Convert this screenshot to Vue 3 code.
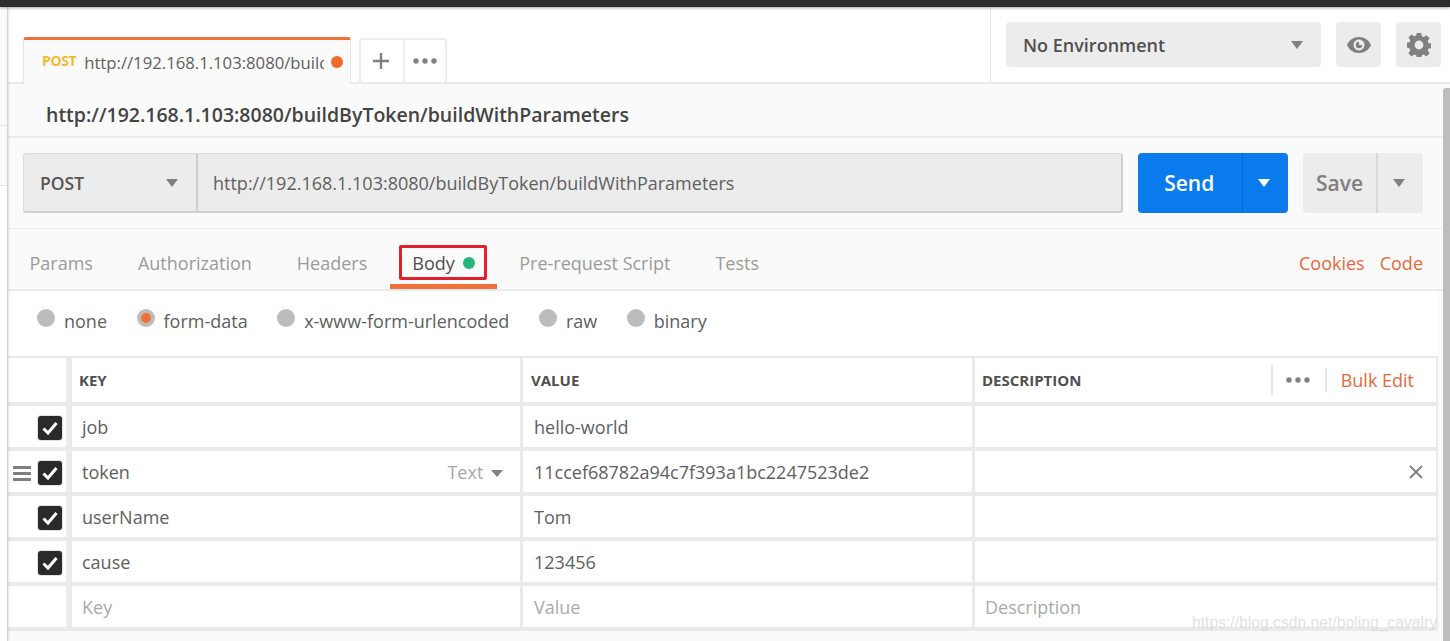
<script setup>
const tabs = [
  { label: 'Params' },
  { label: 'Authorization' },
  { label: 'Headers' },
  { label: 'Body', active: true },
  { label: 'Pre-request Script' },
  { label: 'Tests' },
]
const radios = [
  { label: 'none' },
  { label: 'form-data', on: true },
  { label: 'x-www-form-urlencoded' },
  { label: 'raw' },
  { label: 'binary' },
]
const rows = [
  { key: 'job', value: 'hello-world' },
  { key: 'token', value: '11ccef68782a94c7f393a1bc2247523de2', hover: true },
  { key: 'userName', value: 'Tom' },
  { key: 'cause', value: '123456' },
]
</script>

<template>
  <div class="app">
    <div class="topbar"></div>
    <div class="frame">
      <aside class="rail"></aside>
      <main class="main">
        <header class="head">
          <div class="tabs">
            <div class="tab">
              <span class="verb">POST</span>
              <span class="tab-url">http://192.168.1.103:8080/buildByToken/buildWithParameters</span>
              <span class="tab-dot"></span>
            </div>
            <div class="tab-tools">
              <div class="tool tool-plus">
                <svg width="18" height="18" viewBox="0 0 18 18"><path d="M9 1v16M1 9h16" stroke="#808080" stroke-width="2.4" fill="none" /></svg>
              </div>
              <div class="tool tool-more">
                <svg width="24" height="6" viewBox="0 0 24 6"><circle cx="3" cy="3" r="2.7" fill="#808080" /><circle cx="12" cy="3" r="2.7" fill="#808080" /><circle cx="21" cy="3" r="2.7" fill="#808080" /></svg>
              </div>
            </div>
          </div>
          <div class="env">
            <div class="env-select">
              <span>No Environment</span>
              <i class="caret"></i>
            </div>
            <div class="env-btn">
              <svg width="26" height="16" viewBox="0 0 26 16">
                <path fill-rule="evenodd" fill="#808080" d="M13 0C7.500 0 3 3.200 1 8c2 4.800 6.500 8 12 8s10-3.200 12-8c-2-4.800-6.500-8-12-8zm0 2.600c-3 0-5.400 2.400-5.400 5.400s2.400 5.400 5.400 5.400 5.400-2.400 5.400-5.400-2.400-5.400-5.400-5.400z" />
                <path fill="#808080" d="M13 4.800a3.200 3.200 0 1 0 3.200 3.200H13z" />
              </svg>
            </div>
            <div class="env-btn">
              <svg width="24" height="24" viewBox="0 0 24 24">
                <path fill-rule="evenodd" fill="#808080" d="M9.800 0h4.400l.6 3.300 1.900.8 2.800-1.900 3.100 3.100-1.900 2.800.8 1.900 3.300.6v4.400l-3.300.6-.8 1.900 1.900 2.800-3.100 3.100-2.800-1.900-1.900.8-.6 3.300H9.800l-.6-3.300-1.900-.8-2.800 1.900-3.100-3.100 1.900-2.800-.8-1.900L-.8 14.200V9.800l3.300-.6.8-1.900-1.900-2.800 3.100-3.100 2.800 1.900 1.900-.8zM12 7.600a4.400 4.400 0 1 0 0 8.800 4.400 4.400 0 0 0 0-8.800z" />
              </svg>
            </div>
          </div>
        </header>

        <div class="content">
          <h1 class="title">http://192.168.1.103:8080/buildByToken/buildWithParameters</h1>

          <section class="url-row">
            <div class="url-box">
              <div class="method"><span>POST</span><i class="caret"></i></div>
              <div class="url">http://192.168.1.103:8080/buildByToken/buildWithParameters</div>
            </div>
            <div class="send">
              <span class="send-label">Send</span>
              <span class="send-arrow"><i class="caret caret-white"></i></span>
            </div>
            <div class="save">
              <span class="save-label">Save</span>
              <span class="save-arrow"><i class="caret"></i></span>
            </div>
          </section>

          <nav class="req-tabs">
            <div
              v-for="t in tabs"
              :key="t.label"
              class="req-tab"
              :class="{ active: t.active }"
            >
              <span>{{ t.label }}</span>
              <span v-if="t.active" class="green"></span>
              <span v-if="t.active" class="redbox"></span>
            </div>
            <div class="req-links">
              <span>Cookies</span>
              <span>Code</span>
            </div>
          </nav>

          <section class="body-panel">
            <div class="radios">
              <label v-for="r in radios" :key="r.label" class="radio">
                <span class="radio-dot" :class="{ on: r.on }"></span>
                <span>{{ r.label }}</span>
              </label>
            </div>

            <div class="grid">
              <div class="cell chk"></div>
              <div class="cell th th-key">KEY</div>
              <div class="cell th th-val">VALUE</div>
              <div class="cell th th-desc">
                <span>DESCRIPTION</span>
                <div class="th-tools">
                  <span class="th-dots">
                    <svg width="24" height="6" viewBox="0 0 24 6"><circle cx="3" cy="3" r="2.700" fill="#808080" /><circle cx="12" cy="3" r="2.700" fill="#808080" /><circle cx="21" cy="3" r="2.700" fill="#808080" /></svg>
                  </span>
                  <span class="bulk">Bulk Edit</span>
                </div>
              </div>

              <template v-for="row in rows" :key="row.key">
                <div class="cell chk">
                  <span v-if="row.hover" class="drag"><i></i><i></i><i></i></span>
                  <span class="box">
                    <svg width="18" height="16" viewBox="0 0 18 16"><path d="M2.500 8.500l4.500 4.500 8.500-10" stroke="#fff" stroke-width="3" fill="none" /></svg>
                  </span>
                </div>
                <div class="cell td td-key">
                  <span>{{ row.key }}</span>
                  <span v-if="row.hover" class="type">Text <i class="caret caret-small"></i></span>
                </div>
                <div class="cell td td-val">{{ row.value }}</div>
                <div class="cell td td-desc">
                  <svg v-if="row.hover" class="close" width="14" height="14" viewBox="0 0 14 14"><path d="M1 1l12 12M13 1L1 13" stroke="#808080" stroke-width="1.800" fill="none" /></svg>
                </div>
              </template>

              <div class="cell chk"></div>
              <div class="cell td td-key ph">Key</div>
              <div class="cell td td-val ph">Value</div>
              <div class="cell td ph">Description</div>
            </div>
          </section>
        </div>
      </main>
      <div class="scroll"><div class="thumb"></div></div>
    </div>
    <div class="mark">https://blog.csdn.net/boling_cavalry</div>
  </div>
</template>

<style>
html, body { margin: 0; background: #fafafa; }
</style>

<style scoped>
.app {
  position: relative;
  width: 1450px;
  height: 641px;
  overflow: hidden;
  display: flex;
  flex-direction: column;
  font-family: "Open Sans", "Noto Sans", sans-serif;
  font-size: 18px;
  color: #505050;
  background: #fafafa;
}
.topbar {
  height: 7px;
  background: #2d2d2d;
  box-shadow: 0 1px 3px rgba(0,0,0,.35);
  position: relative;
  z-index: 2;
  flex: none;
}
.frame { flex: 1; display: flex; min-height: 0; }
.rail {
  width: 7px;
  flex: none;
  background: linear-gradient(#fafafa 0 118px, #e6e6e6 118px 119px, #fafafa 119px 178px, #e6e6e6 178px 179px, #fff 179px);
  border-right: 1px solid #d2d2d2;
  box-shadow: 1px 0 2px rgba(0,0,0,.1);
  position: relative;
  z-index: 1;
}
.main { flex: 1; min-width: 0; display: flex; flex-direction: column; }
.scroll {
  width: 7px;
  flex: none;
  background: #fafafa;
  padding-top: 81px;
}
.thumb { height: 553px; background: #bdbdbd; border-radius: 3px 0 0 0; }

.head {
  height: 75px;
  flex: none;
  background: #fff;
  display: flex;
  justify-content: space-between;
  margin-right: -7px;
  border-bottom: 2px solid #eaeaea;
  position: relative;
}
.tabs { display: flex; padding-left: 15px; align-items: flex-end; gap: 8px; margin-bottom: -2px; }
.tab {
  width: 328px;
  height: 47px;
  box-sizing: border-box;
  background: #fafafa;
  border-top: 3px solid #f0703a;
  border-left: 1px solid #e6e6e6;
  border-right: 1px solid #e6e6e6;
  border-radius: 3px 3px 0 0;
  display: flex;
  align-items: center;
  padding: 0 7px 0 18px;
  position: relative;
  z-index: 1;
}
.verb { font-size: 14px; font-weight: 700; color: #f5b92f; margin: 0 8px 3px 0; letter-spacing: -.4px; flex: none; }
.tab-url { width: 240px; overflow: hidden; white-space: nowrap; font-size: 16.700px; color: #606060; flex: none; }
.tab-dot { width: 12px; height: 12px; border-radius: 50%; background: #f26b26; margin-left: 7px; flex: none; }
.tab-tools {
  display: flex;
  height: 44px;
  margin-bottom: 2px;
  box-sizing: border-box;
  border: 2px solid #ececec;
  border-bottom: 0;
  border-radius: 3px 3px 0 0;
  background: #fff;
}
.tool { box-sizing: border-box; display: flex; align-items: center; justify-content: center; }
.tool-plus { width: 44px; padding-right: 2px; border-right: 2px solid #ececec; }
.tool-more { width: 40px; }

.env {
  width: 460px;
  box-sizing: border-box;
  border-left: 1px solid #e6e6e6;
  display: flex;
  gap: 15px;
  padding: 15px 9px 0 15px;
}
.env-select {
  width: 315px;
  height: 45px;
  box-sizing: border-box;
  background: #ececec;
  border-radius: 4px;
  display: flex;
  align-items: center;
  justify-content: space-between;
  padding: 0 18px 0 17px;
  color: #505050;
  font-size: 18px;
  font-weight: 600;
}
.env-btn {
  width: 45px;
  height: 45px;
  background: #ececec;
  border-radius: 4px;
  display: flex;
  align-items: center;
  justify-content: center;
}
.caret {
  display: inline-block;
  width: 0;
  height: 0;
  border-left: 6px solid transparent;
  border-right: 6px solid transparent;
  border-top: 8px solid #808080;
}
.caret-white { border-top-color: #fff; }
.caret-small { border-top-width: 7px; margin-left: 3px; vertical-align: 2px; }

.content { flex: 1; min-height: 0; display: flex; flex-direction: column; }
.title {
  margin: 0;
  height: 54px;
  flex: none;
  box-sizing: border-box;
  padding: 8px 0 0 38px;
  display: flex;
  align-items: center;
  font-size: 19.500px;
  font-weight: 600;
  color: #444;
  border-bottom: 2px solid #ececec;
}
.url-row {
  flex: none;
  height: 91px;
  box-sizing: border-box;
  display: flex;
  gap: 15px;
  padding: 15px 20px 0 15px;
  border-bottom: 1px solid #ececec;
}
.url-box {
  width: 1101px;
  height: 60px;
  box-sizing: border-box;
  display: flex;
  background: #ececec;
  border: 1px solid #dcdcdc;
  border-right: 2px solid #cfcfcf;
  border-bottom: 2px solid #cfcfcf;
  border-radius: 3px;
}
.method {
  width: 174px;
  box-sizing: border-box;
  display: flex;
  align-items: center;
  justify-content: space-between;
  padding: 0 18px 0 16px;
  border-right: 2px solid #cfcfcf;
  font-weight: 600;
  font-size: 17.500px;
  color: #555;
}
.url { flex: 1; display: flex; align-items: center; padding-left: 15px; color: #606060; }
.send {
  width: 150px;
  height: 60px;
  background: #0a7bec;
  border-radius: 4px;
  display: flex;
  color: #fff;
  font-weight: 600;
  font-size: 21px;
}
.send-label { width: 104px; padding-right: 2px; box-sizing: border-box; display: flex; align-items: center; justify-content: center; }
.send-arrow { flex: 1; padding-right: 3px; display: flex; align-items: center; justify-content: center; border-left: 1px solid #0a66c4; }
.save {
  width: 120px;
  height: 60px;
  background: #ececec;
  border-radius: 4px;
  display: flex;
  color: #808080;
  font-weight: 600;
  font-size: 21px;
}
.save-label { width: 73px; display: flex; align-items: center; justify-content: center; }
.save-arrow { flex: 1; padding-right: 3px; display: flex; align-items: center; justify-content: center; border-left: 2px solid #d8d8d8; }

.req-tabs {
  flex: none;
  height: 62px;
  box-sizing: border-box;
  display: flex;
  align-items: center;
  padding: 0 20px 0 0;
  border-bottom: 2px solid #ececec;
  position: relative;
}
.req-tab {
  position: relative;
  height: 100%;
  display: flex;
  align-items: center;
  gap: 8px;
  padding: 8px 22.500px 0;
  color: #9a9a9a;
  box-sizing: border-box;
}
.req-tab:first-child { margin-left: -1px; }
.req-tab.active { color: #505050; width: 107px; padding-right: 0; }
.req-tab.active::after {
  content: "";
  position: absolute;
  left: 0;
  right: 0;
  bottom: 0;
  height: 5px;
  background: #f0703a;
}
.green { width: 12px; height: 12px; border-radius: 50%; background: #26b47f; }
.redbox {
  position: absolute;
  left: 9px;
  top: 16px;
  width: 88px;
  height: 35px;
  box-sizing: border-box;
  border: 3px solid #e0202c;
  border-radius: 2px;
}
.req-links { margin-left: auto; display: flex; gap: 15px; color: #e9683a; padding-top: 8px; }

.body-panel { flex: none; background: #fff; margin-right: 5px; }
.radios {
  height: 65px;
  box-sizing: border-box;
  display: flex;
  align-items: center;
  gap: 29.500px;
  padding: 0 0 6px 29px;
}
.radio { display: flex; align-items: center; gap: 9px; color: #606060; }
.radio-dot {
  width: 18px;
  height: 18px;
  border-radius: 50%;
  background: #bcbcbc;
  margin-top: -6px;
  position: relative;
}
.radio-dot.on::after {
  content: "";
  position: absolute;
  left: 4px;
  top: 4px;
  width: 10px;
  height: 10px;
  border-radius: 50%;
  background: #f0703a;
}
.grid {
  display: grid;
  grid-template-columns: 58px 451px 449px 461px;
  grid-template-rows: 44px repeat(5, 41px);
  column-gap: 3px;
  row-gap: 4px;
  background: #eaeaea;
  border-top: 2px solid #eaeaea;
  border-right: 2px solid #eaeaea;
  border-bottom: 4px solid #eaeaea;
}
.cell { background: #fff; display: flex; align-items: center; box-sizing: border-box; min-width: 0; }
.chk { position: relative; width: 61px; border-right: 3px solid #ececec; padding-left: 30px; }
.th {
  padding-left: 7px;
  font-size: 15px;
  font-weight: 700;
  color: #505050;
}
.th-key { margin-left: 3px; }
.th-val { padding-left: 8px; }
.th-desc { justify-content: space-between; }
.th-tools { display: flex; align-items: center; height: 100%; }
.th-dots {
  height: 30px;
  width: 54px;
  padding-right: 2px;
  box-sizing: border-box;
  display: flex;
  align-items: center;
  justify-content: center;
  border-left: 2px solid #e6e6e6;
}
.bulk {
  color: #e9683a;
  font-weight: 400;
  font-size: 18px;
  padding: 0 22px 0 14px;
  border-left: 2px solid #e6e6e6;
}
.td { padding-left: 10px; color: #606060; position: relative; }
.td-key { margin-left: 3px; justify-content: space-between; padding-right: 17px; }
.td-val { padding-left: 11px; }
.td-desc { justify-content: flex-end; padding-right: 13px; }
.td.ph { color: #aaa; }
.type { color: #a8a8a8; white-space: nowrap; }
.box {
  width: 24px;
  height: 24px;
  margin-top: 2px;
  background: #2a2a2a;
  border-radius: 3px;
  box-shadow: 0 0 0 1px #e2e2e2;
  display: flex;
  align-items: center;
  justify-content: center;
}
.drag {
  position: absolute;
  left: 5px;
  top: 15px;
  width: 18px;
  display: flex;
  flex-direction: column;
  gap: 3px;
}
.drag i { display: block; height: 3px; background: #808080; }
.mark {
  position: absolute;
  left: 1192px;
  top: 614px;
  font-family: "Liberation Sans", sans-serif;
  font-size: 15.700px;
  color: rgba(200,200,200,.55);
  white-space: nowrap;
}
</style>
